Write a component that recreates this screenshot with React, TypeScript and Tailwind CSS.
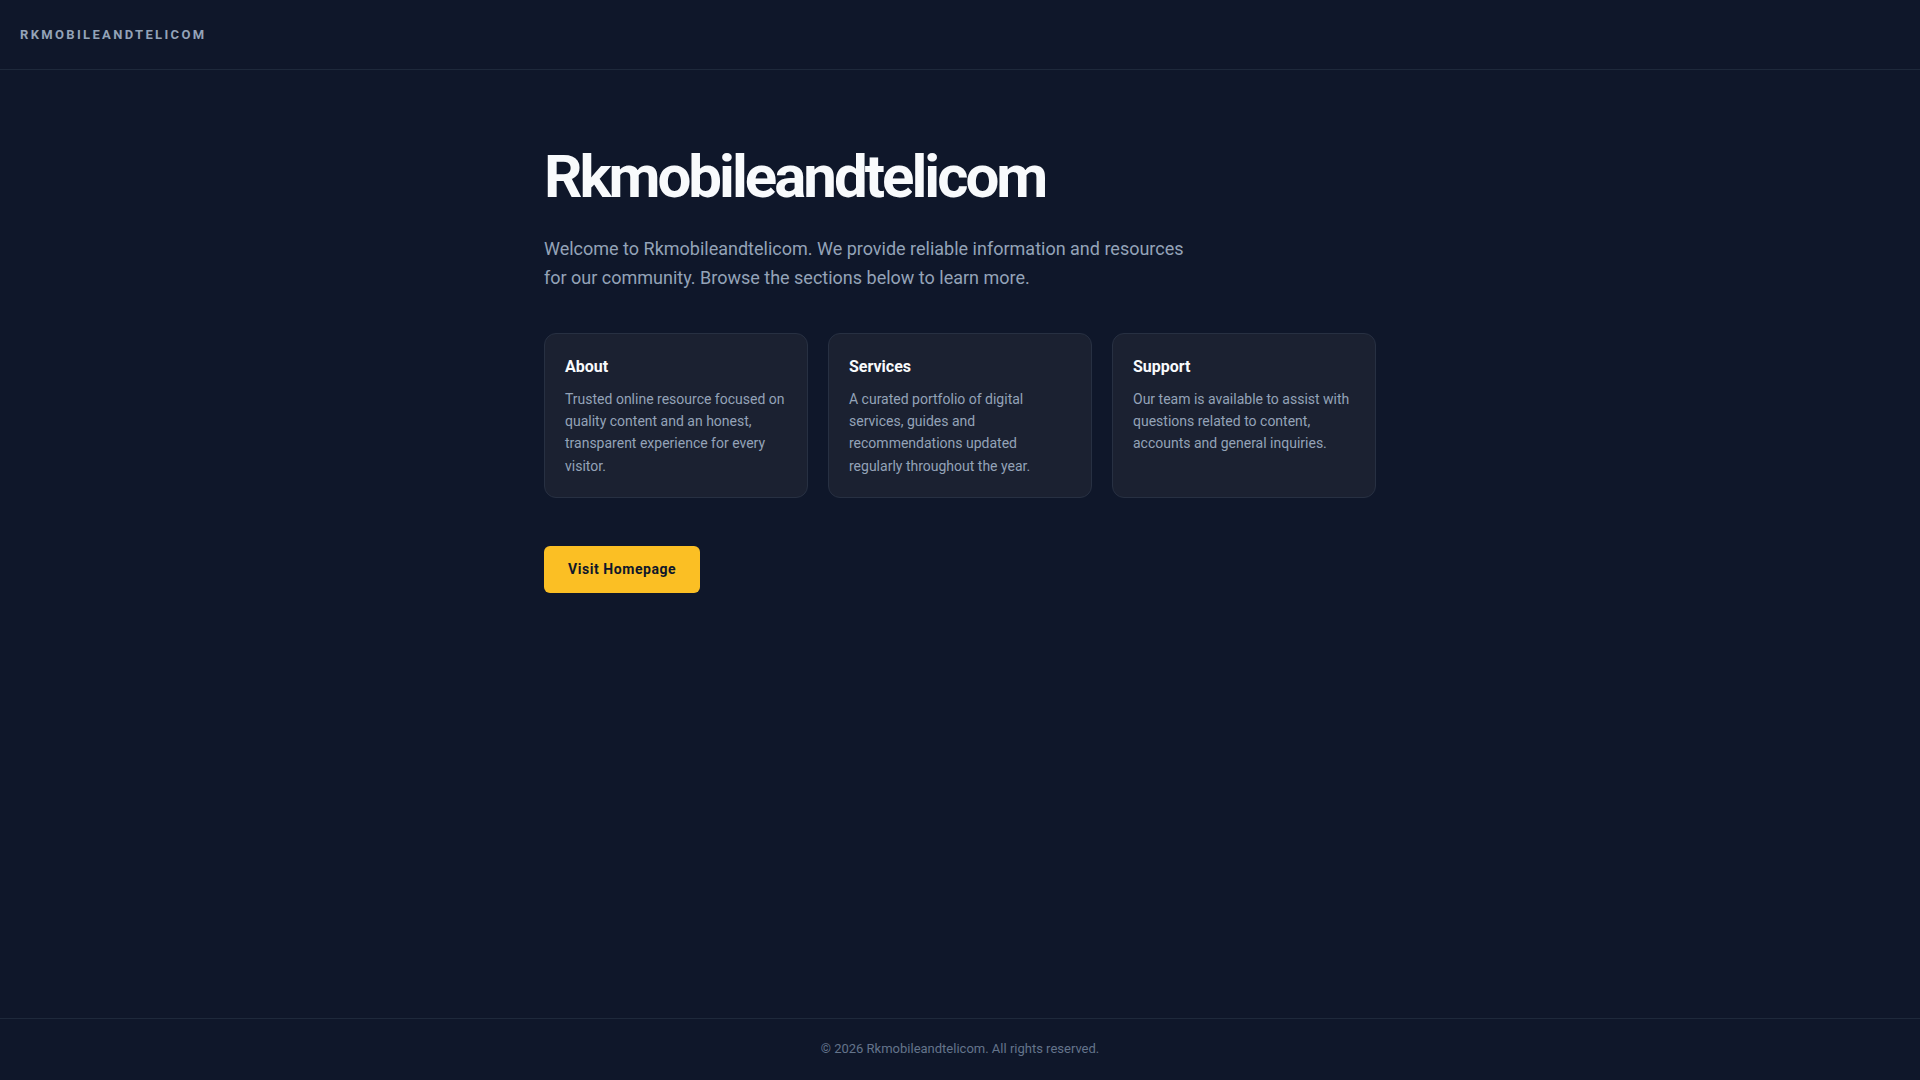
const cards = [
  {
    title: 'About',
    body: 'Trusted online resource focused on quality content and an honest, transparent experience for every visitor.',
  },
  {
    title: 'Services',
    body: 'A curated portfolio of digital services, guides and recommendations updated regularly throughout the year.',
  },
  {
    title: 'Support',
    body: 'Our team is available to assist with questions related to content, accounts and general inquiries.',
  },
]

export default function App() {
  return (
    <div className="min-h-screen flex flex-col bg-[#0f172a] font-['Roboto','Liberation_Sans',sans-serif]">
      {/* Top bar */}
      <header className="h-[70px] flex items-center px-5 border-b border-[#1e293b]">
        <span className="text-[13px] font-bold tracking-[0.18em] text-[#94a3b8]">RKMOBILEANDTELICOM</span>
      </header>

      {/* Hero */}
      <main className="flex-1">
        <div className="max-w-4xl mx-auto px-8 pt-[69px] pb-16">
          <h1 className="text-6xl leading-tight font-bold tracking-tighter text-[#f8fafc] mb-5">Rkmobileandtelicom</h1>
          <p className="max-w-[640px] text-lg leading-relaxed text-[#94a3b8] mb-10">
            Welcome to Rkmobileandtelicom. We provide reliable information and resources for our community. Browse
            the sections below to learn more.
          </p>

          <div className="grid grid-cols-3 gap-5">
            {cards.map((card) => (
              <div key={card.title} className="rounded-xl border border-[#273042] bg-[#1b2131] p-5">
                <h2 className="text-base leading-[26px] font-bold text-[#f8fafc] mb-2">{card.title}</h2>
                <p className="text-sm leading-[22.4px] text-[#94a3b8]">{card.body}</p>
              </div>
            ))}
          </div>

          <button className="mt-12 rounded-md bg-[#fbbf24] px-6 py-3.5 text-sm leading-[19px] font-bold tracking-[0.04em] text-[#0f172a]">
            Visit Homepage
          </button>
        </div>
      </main>

      {/* Footer */}
      <footer className="border-t border-[#1e293b] pt-[19px] pb-[21px] text-center text-[13px] leading-[21px] text-[#64748b]">
        © 2026 Rkmobileandtelicom. All rights reserved.
      </footer>
    </div>
  )
}
